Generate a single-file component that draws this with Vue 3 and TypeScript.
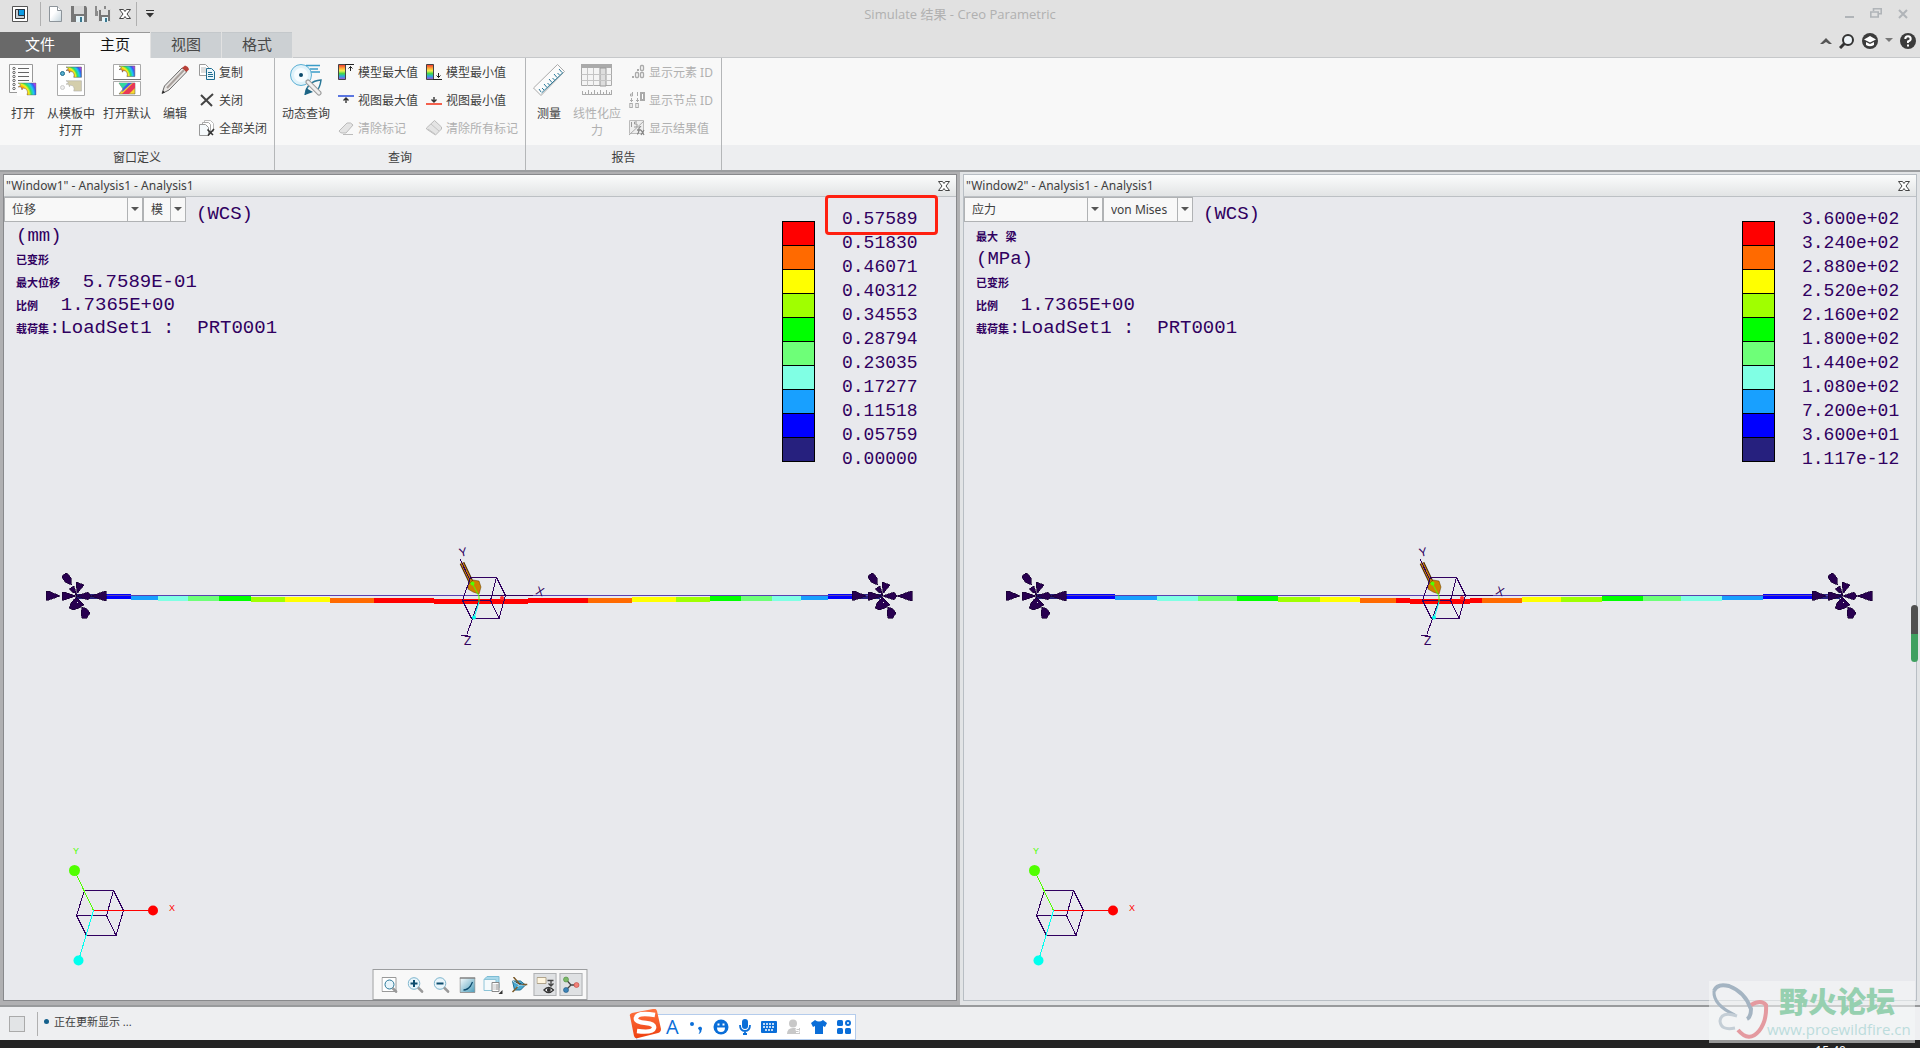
<script setup lang="ts">
import { ref } from 'vue'

interface Segment {
  x1: number
  x2: number
  y: number
  color: string
}
interface InfoLine {
  label: string
  value: string
}
interface ResultPane {
  id: string
  title: string
  quantity: string
  component: string
  narrow: boolean
  active: boolean
  info: InfoLine[]
  levels: string[]
  beam: Segment[]
}

const palette = ['#ff0000', '#ff6a00', '#ffff00', '#a0ff00', '#00ff00', '#6eff78', '#80ffe4', '#18a0ff', '#0000ff', '#26207e']

const [red, orange, yellow, lime, green, mint, cyan, sky, blue, navy] = palette

function buildBeam(stops: number[], colors: string[], tops: number[]): Segment[] {
  return colors.map((color, i) => ({ x1: stops[i], x2: stops[i + 1], y: tops[i], color }))
}

const ramp = [navy, blue, sky, cyan, mint, green, lime, yellow, orange]
const spectrum = [...ramp, red, red, red, ...[...ramp].reverse()]
const sag = [594, 594, 595, 596, 596, 596, 597, 597, 598]
const tops = [...sag, 598, 599, 598, ...[...sag].reverse()]

const panes = ref<ResultPane[]>([
  {
    id: 'w1',
    title: '"Window1" - Analysis1 - Analysis1',
    quantity: '位移',
    component: '模',
    narrow: true,
    active: true,
    info: [
      { label: '', value: '(mm)' },
      { label: '已变形', value: '' },
      { label: '最大位移', value: '  5.7589E-01' },
      { label: '比例', value: '  1.7365E+00' },
      { label: '载荷集', value: ':LoadSet1 :  PRT0001' },
    ],
    levels: ['0.57589', '0.51830', '0.46071', '0.40312', '0.34553', '0.28794', '0.23035', '0.17277', '0.11518', '0.05759', '0.00000'],
    beam: buildBeam(
      [76, 103, 131, 158, 188, 219, 251, 285, 330, 374, 434, 528, 588, 632, 676, 710, 741, 772, 801, 828, 852, 882],
      spectrum,
      tops,
    ),
  },
  {
    id: 'w2',
    title: '"Window2" - Analysis1 - Analysis1',
    quantity: '应力',
    component: 'von Mises',
    narrow: false,
    active: false,
    info: [
      { label: '最大   梁', value: '' },
      { label: '', value: '(MPa)' },
      { label: '已变形', value: '' },
      { label: '比例', value: '  1.7365E+00' },
      { label: '载荷集', value: ':LoadSet1 :  PRT0001' },
    ],
    levels: ['3.600e+02', '3.240e+02', '2.880e+02', '2.520e+02', '2.160e+02', '1.800e+02', '1.440e+02', '1.080e+02', '7.200e+01', '3.600e+01', '1.117e-12'],
    beam: buildBeam(
      [76, 103, 155, 197, 238, 277, 318, 360, 400, 436, 450, 510, 522, 562, 601, 642, 683, 721, 762, 803, 855, 882],
      spectrum,
      tops,
    ),
  },
])

const tabs = ['文件', '主页', '视图', '格式']
const activeTab = ref('主页')
</script>

<template>
  <div class="app">
    <svg class="defs" width="0" height="0" aria-hidden="true">
      <defs>
        <radialGradient id="rainbow" gradientUnits="userSpaceOnUse" cx="0" cy="12" r="20">
          <stop offset="0.2" stop-color="#e03090" />
          <stop offset="0.34" stop-color="#ff3020" />
          <stop offset="0.46" stop-color="#ffb000" />
          <stop offset="0.56" stop-color="#f8f020" />
          <stop offset="0.66" stop-color="#30e060" />
          <stop offset="0.78" stop-color="#20c8f0" />
          <stop offset="0.9" stop-color="#3060f0" />
          <stop offset="1" stop-color="#b040f0" />
        </radialGradient>
        <linearGradient id="bars" x1="0" y1="0" x2="0" y2="1">
          <stop offset="0" stop-color="#f03030" />
          <stop offset="0.25" stop-color="#ffa838" />
          <stop offset="0.42" stop-color="#f4f050" />
          <stop offset="0.6" stop-color="#48d848" />
          <stop offset="0.78" stop-color="#28a8e0" />
          <stop offset="1" stop-color="#b048d8" />
        </linearGradient>
        <linearGradient id="page" x1="0" y1="0" x2="1" y2="1">
          <stop offset="0.4" stop-color="#ffffff" />
          <stop offset="1" stop-color="#c4d4dc" />
        </linearGradient>
        <linearGradient id="aqua" x1="0" y1="0" x2="1" y2="1">
          <stop offset="0" stop-color="#fafdfe" />
          <stop offset="1" stop-color="#4a9cba" />
        </linearGradient>
        <linearGradient id="sogou" x1="0" y1="0" x2="0" y2="1">
          <stop offset="0" stop-color="#ff7440" />
          <stop offset="1" stop-color="#ee4010" />
        </linearGradient>
        <path id="fringe" d="M0 0H18V12H9Q11 6 5 5L4 7L3 4H0L3 2Z" />
        <g id="clamp">
          <path d="M-14 -19L-13 -21L-10 -23L-7 -21L-5 -18L-5 -14L-4 -11L-7 -12L-11 -14Z" />
          <path d="M-7 -7L-2 -10L1 0Z" />
          <path d="M0 -14L3 -13L8 -11L4 -6L1 -2Z" />
          <path d="M-30 -5L-27 -5L-16 0L-27 4L-30 4Z" />
          <path d="M-14 -4L-12 -4L0 0L-12 4L-14 4Z" />
          <path d="M0 0L12 -4L15 0L12 4Z" />
          <path d="M15 0L26 -4L30 -5V5L26 4Z" />
          <path d="M0 1L4 5L8 9L3 12L-3 14L-7 12L-5 7Z" />
          <path d="M6 11L11 13L14 17L11 22L6 22L5 17Z" />
          <path class="clamp-glint" d="M-2 -3h1v1h-1zM1 -3h1v1h-1zM-2 2h1v1h-1zM1 6h1v1h-1z" />
        </g>
      </defs>
    </svg>

    <header class="titlebar">
      <div class="quick">
        <button class="ico app-ico" aria-label="应用程序">
          <svg width="16" height="16"><path d="M.5 .5h15v15H.5z" fill="#fff" stroke="#555" /><path d="M3.500 3.500h9v9h-9z" fill="#c8cfd4" stroke="#333" /><path d="M6.500 3.500h6v6h-6z" fill="#0c9ce4" stroke="#234" /></svg>
        </button>
        <i class="sep"></i>
        <button class="ico" aria-label="新建">
          <svg width="14" height="16"><path d="M.5 .5h8l4 4v11H.5z" fill="url(#page)" stroke="#8d949a" /><path d="M8.500 .5v4h4" fill="#fff" stroke="#8d949a" /></svg>
        </button>
        <button class="ico" aria-label="保存">
          <svg width="16" height="16"><path d="M0 0h15l1 2v14H0z" fill="#777" /><path d="M3 0h10v8H3z" fill="#d6d6d6" /><path d="M5 10h8v6H5z" fill="#e4f3f8" /><path d="M9 11h2v5H9z" fill="#3a7890" /></svg>
        </button>
        <button class="ico" aria-label="另存为">
          <svg width="16" height="16"><path d="M0 0h11v10H0z" fill="#8c8c8c" /><path d="M2 0h7v5H2z" fill="#e2e2e2" /><path d="M3.500 3.500h12v12h-12z" fill="#777" stroke="#ddd" /><path d="M6 4h7v5H6z" fill="#e0e0e0" /><path d="M7 11h6v5H7z" fill="#e4f3f8" /><path d="M10 12h2v4h-2z" fill="#3a7890" /></svg>
        </button>
        <button class="ico close-ico" aria-label="关闭窗口">
          <svg width="12" height="12"><path d="M.5 1.500h4L6 3.500l1.500-2h4L8 6l3.500 4.500h-4L6 8.500l-1.500 2h-4L4 6z" fill="#fff" stroke="#444" /></svg>
        </button>
        <i class="sep"></i>
        <button class="ico" aria-label="自定义快速访问工具栏">
          <svg width="10" height="8"><path d="M1 .5h8" stroke="#333" /><path d="M1 3h8L5 7.500z" fill="#333" /></svg>
        </button>
      </div>
      <h1 class="title">Simulate 结果 - Creo Parametric</h1>
      <div class="syscmds">
        <button class="ico" aria-label="最小化"><svg width="12" height="12"><path d="M2 9h9" stroke="#b0b4b8" stroke-width="2" /></svg></button>
        <button class="ico" aria-label="还原"><svg width="12" height="12"><path d="M3.500 3V.8h7.700v5H8M.8 4h7.400v5H.8z" fill="none" stroke="#b0b4b8" stroke-width="1.600" /></svg></button>
        <button class="ico" aria-label="关闭"><svg width="12" height="12"><path d="M2 2l8 8M10 2l-8 8" stroke="#b0b4b8" stroke-width="2" /></svg></button>
      </div>
    </header>

    <nav class="tabrow">
      <button v-for="t in tabs" :key="t" class="tab" :class="{ file: t === '文件', on: t === activeTab }" @click="activeTab = t">{{ t }}</button>
      <div class="tabline">
        <button class="ico" aria-label="收起功能区"><svg width="12" height="8"><path d="M0 7l6-6 6 6H9L6 5 3 7z" fill="#555" /></svg></button>
        <button class="ico" aria-label="搜索"><svg width="16" height="16"><circle cx="9" cy="7" r="5" fill="#eef4f8" stroke="#333" stroke-width="2" /><path d="M5.500 10.500L1 15" stroke="#333" stroke-width="3" /></svg></button>
        <button class="ico" aria-label="学习"><svg width="16" height="16"><circle cx="8" cy="8" r="8" fill="#3c3c3c" /><path d="M8 3l6 3.500L8 9.500 2 6.500z" fill="#fff" /><path d="M4 9l4 2 4-2v3q-4 2.500-8 0z" fill="#fff" /></svg></button>
        <button class="ico" aria-label="更多"><svg width="8" height="5"><path d="M0 0h8L4 4z" fill="#777" /></svg></button>
        <button class="ico" aria-label="帮助"><svg width="16" height="16"><circle cx="8" cy="8" r="8" fill="#3c3c3c" /><path d="M5.300 6q0-2.700 2.700-2.700T10.700 6Q10.700 7.500 8 8.500V10" fill="none" stroke="#fff" stroke-width="2" /><path d="M7 11.500h2v2H7z" fill="#fff" /></svg></button>
      </div>
    </nav>

    <section class="ribbon">
      <div class="group">
        <div class="tools">
          <button class="big w46">
            <svg width="28" height="32"><path d="M.5 .5h23v28H.5z" fill="#fdfdfd" stroke="#999" /><path d="M9 4.500h11M9 8.500h11M9 12.500h11M9 16.500h11" stroke="#666" /><g fill="none" stroke="#666"><circle cx="5" cy="4.500" r="1.200" /><circle cx="5" cy="8.500" r="1.200" /><circle cx="5" cy="12.500" r="1.200" /><circle cx="5" cy="16.500" r="1.200" /><circle cx="5" cy="20.500" r="1.200" /><circle cx="5" cy="24.500" r="1.200" /></g><path d="M8 18h20v14H8z" fill="#fdfdfd" /><use href="#fringe" x="9" y="19" fill="url(#rainbow)" stroke="#555" stroke-width=".4" /></svg>
            <span>打开</span>
          </button>
          <button class="big w50">
            <svg width="28" height="32"><path d="M.5 .5h27v31H.5z" fill="#fff" stroke="#aaa" /><circle cx="5.500" cy="9.500" r="2" fill="#58b0d0" stroke="#1b6a8c" /><circle cx="5.500" cy="23.500" r="2" fill="#eee" stroke="#ccc" /><g transform="translate(9 3) scale(.86)"><use href="#fringe" fill="url(#rainbow)" stroke="#555" stroke-width=".6" /><use href="#fringe" y="16" fill="#d4ceac" stroke="#aaa" stroke-width=".6" /></g></svg>
            <span>从模板中<br />打开</span>
          </button>
          <button class="big w62">
            <svg width="28" height="32"><path d="M.5 .5h27v15H.5z" fill="#fff" stroke="#aaa" /><path d="M0 15.500h28" stroke="#777" /><path d="M.5 17.500h27v14H.5z" fill="#fff" stroke="#aaa" /><g transform="translate(6 2) scale(.88)"><use href="#fringe" fill="url(#rainbow)" stroke="#555" stroke-width=".6" /></g><path d="M6 19h16v11H6l4-5z" fill="#f8d830" stroke="#555" stroke-width=".5" /><path d="M9 30l11-11h2v5l-6 6z" fill="#e83858" /><path d="M6 19h9l-5 6z" fill="#30d8a0" /><path d="M9 28l10-9h-4l-5 5z" fill="#3f5fe8" /></svg>
            <span>打开默认</span>
          </button>
          <button class="big w34">
            <svg width="28" height="32"><path d="M1 29.500L3.500 22 21 4q3 0 4.500 4L8 26z" fill="#e9e6e4" stroke="#666" /><path d="M6 24L23 6" stroke="#a8a09c" stroke-width="2" /><path d="M21 4l3-2.500q3.500 1 4 4L25.500 8z" fill="#b84038" /><path d="M1 29.500l1-3 2 2z" fill="#222" /></svg>
            <span>编辑</span>
          </button>
          <div class="stack">
            <button class="small"><svg width="16" height="16"><path d="M.5 .5h6l3 3v8h-9z" fill="#fff" stroke="#999" /><path d="M2 4h5M2 6h5M2 8h5" stroke="#bbb" /><path d="M7.500 4.500h5l3 3v8h-8z" fill="#eaf6fb" stroke="#1f6d90" /><path d="M9 8.500h4M9 10.500h5M9 12.500h5" stroke="#1f6d90" /></svg>复制</button>
            <button class="small"><svg width="16" height="16"><path d="M2 3l11 11M14 2L2 13" stroke="#444" stroke-width="2" /></svg>关闭</button>
            <button class="small"><svg width="16" height="16"><path d="M5.500 .5h6l3 3v8h-9z" fill="#fff" stroke="#bbb" /><path d="M3.500 2.500h6l2 2v8h-8z" fill="#fff" stroke="#aaa" /><path d="M.5 4.500h6l3 3v8h-9z" fill="#f6fafc" stroke="#999" /><path d="M8.500 9.500l5.500 5.500M15 9l-6 6.500" stroke="#333" stroke-width="1.600" /></svg>全部关闭</button>
          </div>
        </div>
        <div class="caption">窗口定义</div>
      </div>

      <div class="group g2">
        <div class="tools">
          <button class="big w62">
            <svg width="32" height="32"><path d="M16 1.500h14M20 5h8M21 8h9" stroke="#3a9cc8" stroke-width="1.500" /><circle cx="11" cy="11" r="10.500" fill="#dff2fa" stroke="#5cb0d4" /><circle cx="11" cy="11" r="7" fill="#f6fcff" /><circle cx="11" cy="11" r="2" fill="#0b4a6c" /><path d="M15 31q2-14 16-15-1 8-5 12" fill="none" stroke="#2a7898" stroke-width="1.500" /><path d="M15 31l1-7 7 4z" fill="#1d6484" /><path d="M18 18l11 11" stroke="#999" stroke-width="5" stroke-linecap="round" /><path d="M18 18l11 11" stroke="#eee" stroke-width="3" stroke-linecap="round" /></svg>
            <span>动态查询</span>
          </button>
          <div class="stack c1">
            <button class="small"><svg width="16" height="16"><path d="M.5 .5h7v15h-7z" fill="url(#bars)" stroke="#444" /><path d="M7 .5h9M12.500 7V2.500M10.500 4.500l2-2 2 2" fill="none" stroke="#222" /></svg>模型最大值</button>
            <button class="small"><svg width="16" height="16"><path d="M0 4h16" stroke="#5b76e0" stroke-width="2" /><path d="M8 11V6M5.500 8.500L8 6l2.500 2.500" fill="none" stroke="#333" stroke-width="1.400" /></svg>视图最大值</button>
            <button class="small" disabled><svg width="16" height="16"><path d="M1 11l8-8q4-1 6 2l-7 8H4q-2 0-3-2z" fill="#e4e4e4" stroke="#bbb" /><path d="M5 14.500h10" stroke="#bbb" /></svg>清除标记</button>
          </div>
          <div class="stack c2">
            <button class="small"><svg width="16" height="16"><path d="M.5 .5h7v15h-7z" fill="url(#bars)" stroke="#444" /><path d="M7 15.500h9M12.500 9v4.500M10.500 11.500l2 2 2-2" fill="none" stroke="#222" /></svg>模型最小值</button>
            <button class="small"><svg width="16" height="16"><path d="M0 12h16" stroke="#f4604c" stroke-width="2" /><path d="M8 5v5M5.500 7.500L8 10l2.500-2.500" fill="none" stroke="#333" stroke-width="1.400" /></svg>视图最小值</button>
            <button class="small" disabled><svg width="16" height="16"><path d="M.5 8l8-7.500 7 6.500v2l-6 6-9-6z" fill="#e4e4e4" stroke="#bbb" /><path d="M5 4l8 7M2 9l7 5" stroke="#c4c4c4" fill="none" /></svg>清除所有标记</button>
          </div>
        </div>
        <div class="caption">查询</div>
      </div>

      <div class="group g3">
        <div class="tools">
          <button class="big w46">
            <svg width="32" height="32"><path d="M.5 24L24.500 .5l7 7L8 31.500z" fill="#fbfbfb" stroke="#aaa" /><path d="M8.500 29L30 8.500M8 28l-2-3M11 26l-2-2M14 23.500l-3-3.500M16.500 21l-2-2M19 18.500l-3-3.500M21.500 16l-2-2M24 13.500L21 10M26.500 11l-2-2M29 8.500L26 5" stroke="#2a7898" /></svg>
            <span>测量</span>
          </button>
          <button class="big w50" disabled>
            <svg width="32" height="32"><path d="M.5 .5h30v21H.5z" fill="#f4f4f4" stroke="#aaa" /><path d="M0 0h31v4H0z" fill="#aaa" /><path d="M19 4h6v18h-6z" fill="#ddd" stroke="#999" /><path d="M.5 10.500h30M.5 16.500h30M6.500 4v18M12.500 4v18" stroke="#c4c4c4" /><path d="M1 30.500h30M1.500 27v4M4.500 28v3M7.500 26v5M10.500 28v3M13.500 26v5M16.500 28v3M19.500 26v5M22.500 28v3M25.500 26v5M28.500 28v3M30.500 26v5" stroke="#aaa" /></svg>
            <span>线性化应<br />力</span>
          </button>
          <div class="stack c3">
            <button class="small" disabled><svg width="16" height="16"><g fill="none" stroke="#aaa" stroke-width="1.300"><rect x="11.500" y="1.500" width="3" height="5" rx="1" /><rect x="6.500" y="8.500" width="3" height="5" rx="1" /><rect x="11.500" y="8.500" width="3" height="5" rx="1" /></g><path d="M8 5h2v2H8zM3 12h2v2H3z" fill="#aaa" /></svg>显示元素 ID</button>
            <button class="small" disabled><svg width="16" height="16"><path d="M11 0h5v9h-5z" fill="#aaa" /><path d="M3.500 0v4h-2V2h2M8.500 0v4M2.500 6v4M1 8.500h3M8.500 6v4M7 8.500h3" fill="none" stroke="#aaa" /><rect x=".8" y="11.500" width="2.500" height="4" fill="none" stroke="#aaa" /><rect x="6.800" y="11.500" width="2.500" height="4" fill="none" stroke="#aaa" /><path d="M13.500 2v5" stroke="#fff" /></svg>显示节点 ID</button>
            <button class="small" disabled><svg width="16" height="16"><path d="M.5 .5h14v13H.5z" fill="#eee" stroke="#bbb" /><path d="M0 15L15 1" stroke="#aaa" /><path d="M2.500 2v5M8 2H5.500v2H8v3H5" fill="none" stroke="#999" /><path d="M8 14q2 0 2-6 1-2 2-1M8 10h4M12 10l3 5M15 10l-3 5" fill="none" stroke="#888" stroke-width="1.300" /></svg>显示结果值</button>
          </div>
        </div>
        <div class="caption">报告</div>
      </div>
      <div class="group rest"><div class="tools"></div><div class="caption"></div></div>
    </section>

    <main class="workspace">
      <div v-for="p in panes" :key="p.id" class="slot" :class="{ active: p.active }">
        <article class="pane">
          <header class="panehead">
            <h2>{{ p.title }}</h2>
            <button class="ico" aria-label="关闭结果窗口">
              <svg width="12" height="12"><path d="M.5 1.500h4L6 3.500l1.500-2h4L8 6l3.500 4.500h-4L6 8.500l-1.500 2h-4L4 6z" fill="#fff" stroke="#444" /></svg>
            </button>
          </header>
          <div class="canvas">
            <svg class="scene" viewBox="4 197 952 803" preserveAspectRatio="xMidYMid meet" aria-hidden="true">
              <g shape-rendering="crispEdges">
                <rect v-for="(s, i) in p.beam" :key="i" :x="s.x1" :y="s.y" :width="s.x2 - s.x1" height="5" :fill="s.color" />
                <path d="M76 595.500H882" stroke="#5a40b0" />
                <use href="#clamp" x="76" y="596" class="clamp" />
                <use href="#clamp" x="882" y="596" class="clamp" />
              </g>
              <path d="M462 563L472 584" stroke="#402000" stroke-width="5" />
              <path d="M462 563L472 584" stroke="#c07c10" stroke-width="3" />
              <path d="M468 585l5-5 6 1 2 6-2 7-6-2-5-3z" fill="#d08000" stroke="#604000" stroke-width=".5" />
              <g fill="none" stroke="#300060" shape-rendering="crispEdges">
                <path d="M470.500 577.500H496.500L505.500 595.500L499 618.500H471.500L462.500 600.500L470.500 577.500M462.500 600.500H490.500L496.500 577.500M490.500 600.500L499 618.500M479 600L467 634M479 595.500H533M460 559L470 580" />
              </g>
              <path d="M472 583l7 13v6" fill="none" stroke="#50ff00" />
              <circle cx="472.500" cy="583.500" r="2" fill="#50ff00" />
              <path d="M479 602l-5 16" stroke="#00ffee" /><circle cx="474" cy="617.500" r="2" fill="#00ffee" />
              <circle cx="502" cy="598" r="2" fill="#ff3030" />
              <g class="axis">
                <text x="0" y="0" transform="translate(460 557) rotate(-12)">Y</text>
                <text x="0" y="0" transform="translate(535 594) rotate(18)">X</text>
                <text x="464" y="645">Z</text>
              </g>
              <path d="M461 635.500h7" stroke="#300060" />
              <g fill="none" stroke="#300060" shape-rendering="crispEdges">
                <path d="M84.500 890.500H113.500L123.500 910.500L116 935.500H86.500L76.500 915.500L84.500 890.500M76.500 915.500H106.500L113.500 890.500M106.500 915.500L116 935.500" />
                <path d="M93.500 910.500L74.500 870.500" stroke="#50ff00" />
                <path d="M93.500 910.500H153" stroke="#ff0000" />
                <path d="M93.500 910.500L78.500 960.500" stroke="#00ffee" />
              </g>
              <circle cx="74.500" cy="870.500" r="5.500" fill="#50ff00" />
              <circle cx="153" cy="910.500" r="5" fill="#ff0000" />
              <circle cx="78.500" cy="960.500" r="5" fill="#00ffee" />
              <text class="tri" x="73" y="854" fill="#50ff00">Y</text>
              <text class="tri" x="169" y="911" fill="#ff0000">X</text>
            </svg>

            <div class="hud">
              <div class="readout">
                <div class="combos">
                  <span class="combo wide">
                    <select :aria-label="'结果量 ' + p.id"><option>{{ p.quantity }}</option></select>
                    <svg width="8" height="5"><path d="M0 0h8L4 4z" fill="#555" /></svg>
                  </span>
                  <span class="combo" :class="p.narrow ? 'slim' : 'mid'">
                    <select :aria-label="'分量 ' + p.id"><option>{{ p.component }}</option></select>
                    <svg width="8" height="5"><path d="M0 0h8L4 4z" fill="#555" /></svg>
                  </span>
                  <span class="plot wcs">(WCS)</span>
                </div>
                <p v-for="(l, i) in p.info" :key="i" class="line"><span class="cn">{{ l.label }}</span><span class="plot">{{ l.value }}</span></p>
              </div>
              <div class="legend">
                <div class="swatches">
                  <i v-for="c in palette" :key="c" :style="{ background: c }"></i>
                </div>
                <ol class="levels plot">
                  <li v-for="v in p.levels" :key="v">{{ v }}</li>
                </ol>
                <div v-if="p.active" class="marker"></div>
              </div>
            </div>

            <div v-if="p.active" class="viewbar">
              <button class="ico" aria-label="重新调整"><svg width="16" height="16"><path d="M.5 .5h14v14H.5z" fill="#fff" stroke="#999" /><circle cx="8" cy="7.500" r="4.500" fill="#e8f5fb" stroke="#2a7898" /><path d="M11 11l4.500 4.500" stroke="#999" stroke-width="2.500" /></svg></button>
              <button class="ico" aria-label="放大"><svg width="16" height="16"><circle cx="6.500" cy="6.500" r="5.800" fill="#e8f5fb" stroke="#7db4cc" /><path d="M3 6.500h7M6.500 3v7" stroke="#0d4c6e" stroke-width="2" /><path d="M10.500 10.500l5 5" stroke="#999" stroke-width="2.500" /></svg></button>
              <button class="ico" aria-label="缩小"><svg width="16" height="16"><circle cx="6.500" cy="6.500" r="5.800" fill="#e8f5fb" stroke="#7db4cc" /><path d="M3 6.500h7" stroke="#0d4c6e" stroke-width="2" /><path d="M10.500 10.500l5 5" stroke="#999" stroke-width="2.500" /></svg></button>
              <button class="ico" aria-label="重画"><svg width="16" height="16"><path d="M.5 1h15v14.500H.5z" fill="url(#aqua)" stroke="#999" /><path d="M0 1h16" stroke="#777" stroke-width="1" /><path d="M4 13q4 0 7-4l2-4" stroke="#0d4c6e" stroke-width="1.300" fill="none" /></svg></button>
              <button class="ico" aria-label="显示样式"><svg width="20" height="18"><path d="M.5 3.500l3-3h12v11l-3 3H.5z" fill="#a8d8ea" stroke="#7cbcd4" /><path d="M.5 3.500h12v11H.5z" fill="#f4fafc" stroke="#8cc4d8" /><path d="M8.500 6.500h7v9h-7z" fill="#fff" stroke="#888" /><path d="M10 9h1M12 9h3M10 11h1M12 11h3M10 13h1M12 13h3" stroke="#888" /><path d="M19 14v4h-4z" fill="#333" /></svg></button>
              <button class="ico" aria-label="视图方向"><svg width="16" height="16"><path d="M1 4h8l5 4-5 5H3z" fill="#48a8d0" stroke="#1f6d90" /><path d="M1 4l7 4 6 0M8 8l-5 5" stroke="#c8e8f4" /><path d="M2 0l6 7M1 15l5-5M11 7.500h5" stroke="#7a5a2a" stroke-width="1.500" /></svg></button>
              <button class="ico on" aria-label="注释显示"><svg width="18" height="18"><path d="M.5 1.500h9v6h-9z" fill="#fff6e0" stroke="#b0a48c" /><path d="M11 4.500h6M14.500 4.500v5M12 7.500l2.500 2.500 2.500-2.500" fill="none" stroke="#444" stroke-width="1.300" /><path d="M7.500 14q4.500-5 9.500 0-5 5-9.500 0z" fill="#fff" stroke="#333" stroke-width="1.400" /><circle cx="12.300" cy="14" r="2" fill="#333" /></svg></button>
              <button class="ico on" aria-label="旋转中心"><svg width="18" height="18"><path d="M3.500 3.500l5 5.500-5 5M8.500 9h5" fill="none" stroke="#444" stroke-width="1.300" /><circle cx="3.500" cy="3.500" r="2.500" fill="#7cb868" stroke="#4c8c40" stroke-width=".6" /><circle cx="3.500" cy="14" r="2.500" fill="#3c84b8" stroke="#205880" stroke-width=".6" /><circle cx="14" cy="9" r="2.500" fill="#f08078" stroke="#c04840" stroke-width=".6" /></svg></button>
            </div>
          </div>
        </article>
      </div>
      <i class="knob"></i>
    </main>

    <footer class="status">
      <input type="checkbox" class="flag" aria-label="导航器" />
      <i class="sep"></i>
      <p class="msg"><i class="dot"></i>正在更新显示 ...</p>
      <div class="ime">
        <svg class="logo" width="32" height="30"><path d="M1 7Q0 5 3 4L24 0q3-1 4 2l4 18q0 3-3 4L9 29q-3 1-4-2z" fill="url(#sogou)" /><path d="M26 6Q8 3 7 9q-1 4 10 5 9 1 8 5-1 5-17 3" fill="none" stroke="#fff" stroke-width="4.500" /></svg>
        <span class="mode">A</span>
        <svg width="14" height="16"><circle cx="3" cy="5" r="2" fill="#0a6ed8" /><path d="M9 9.500a2 2 0 1 1 3.500 1.500q0 3-3 4 1.500-2 1-3.500z" fill="#0a6ed8" /></svg>
        <svg width="16" height="16"><circle cx="8" cy="8" r="7.500" fill="#0a6ed8" /><path d="M4 8.500h8q0 4.500-4 4.500t-4-4.500zM4.500 4.500h2v2h-2zM9.500 4.500h2v2h-2z" fill="#fff" /></svg>
        <svg width="12" height="16"><rect x="3" y="0" width="6" height="10" rx="3" fill="#0a6ed8" /><path d="M1 6q0 6 5 6t5-6M6 12v4M4 15h4" fill="none" stroke="#0a6ed8" stroke-width="1.800" /></svg>
        <svg width="16" height="12"><rect width="16" height="12" rx="1" fill="#0a6ed8" /><path d="M2 3h12M2 6h12M4 9h8" stroke="#fff" stroke-width="1.600" stroke-dasharray="2 1" /></svg>
        <svg width="14" height="16"><circle cx="6" cy="4.500" r="4" fill="#c8c8c8" /><path d="M0 15q0-6 6-6h7v6z" fill="#c8c8c8" /><path d="M12 9.500H9v2h3v2H9" stroke="#fff" fill="none" /></svg>
        <svg width="16" height="14"><path d="M4 0q4 3 8 0l4 3-2 4-2-1v8H4V6L2 7 0 3z" fill="#0a6ed8" /></svg>
        <svg width="14" height="14"><g fill="#0a6ed8"><rect width="6" height="6" rx="1.500" /><rect x="9" y="1" width="4" height="4" rx="2" fill="#fff" stroke="#0a6ed8" stroke-width="2" /><rect y="8" width="6" height="6" rx="1.500" /><rect x="8" y="8" width="6" height="6" rx="1.500" /></g></svg>
      </div>
    </footer>
    <div class="taskbar"><time>15:40</time></div>

    <div class="watermark">
      <svg width="64" height="60"><g fill="none"><path d="M5 10Q8 2 20 5Q36 11 42 28Q42 36 38 38" stroke="#a4b4c2" stroke-width="4" /><path d="M5 10Q4 24 26 34" stroke="#a4b4c2" stroke-width="3" /><path d="M28 35Q12 30 11 40Q12 50 26 47" stroke="#c4ced6" stroke-width="3" /><path d="M42 24Q52 18 57 24Q58 40 50 50Q40 62 29 49" stroke="#e49aa0" stroke-width="4" /></g></svg>
      <div class="words"><strong>野火论坛</strong><span>www.proewildfire.cn</span></div>
    </div>
  </div>
</template>

<style>
html,
body {
  background: #b0b0b0;
}
</style>

<style scoped>
.app {
  position: relative;
  display: flex;
  flex-direction: column;
  height: 100vh;
  overflow: hidden;
  background: #e1e1e1;
  font: 12px/17px 'Noto Sans', 'Noto Sans CJK SC', sans-serif;
  color: #404040;
}
.defs {
  position: absolute;
}
svg {
  display: block;
  flex: none;
}
button {
  margin: 0;
  padding: 0;
  border: 0;
  background: none;
  font: inherit;
  color: inherit;
}
h1,
h2,
p,
ol {
  margin: 0;
  padding: 0;
  font: inherit;
  list-style: none;
}
.sep {
  width: 1px;
  height: 24px;
  background: #b0b0b0;
}
.ico {
  display: flex;
  align-items: center;
  justify-content: center;
}

.titlebar {
  display: grid;
  grid-template-columns: 1fr auto 1fr;
  height: 28px;
  padding-bottom: 4px;
  flex: none;
}
.quick {
  display: flex;
  align-items: center;
  gap: 8px;
  padding: 0 12px;
}
.app-ico {
  margin-right: 4px;
}
.close-ico {
  margin-right: -3px;
}
.title {
  font-family: 'Open Sans', 'Noto Sans CJK SC', sans-serif;
  font-size: 13px;
  line-height: 28px;
  color: #b0b0b0;
}
.syscmds {
  display: flex;
  justify-content: flex-end;
  gap: 15px;
  padding-right: 11px;
}

.tabrow {
  display: flex;
  gap: 1px;
  height: 26px;
  flex: none;
}
.tab {
  width: 70px;
  padding-bottom: 4px;
  background: #ccd0d3;
  font-size: 15px;
  line-height: 20px;
  border-top: 1px solid #c4c8cb;
  color: #484848;
}
.tab.file {
  width: 80px;
  margin-right: -1px;
  background: #696969;
  color: #fff;
  border-top-color: #696969;
}
.tab.on {
  background: #f8f8f8;
  border-top: 1px solid #999;
  color: #111;
}
.tabline {
  flex: 1;
  display: flex;
  justify-content: flex-end;
  align-items: center;
  gap: 7px;
  padding: 0 4px 8px 0;
  border-bottom: 1px solid #c6c8ca;
}

.ribbon {
  display: flex;
  flex: none;
  height: 112px;
  background: #f8f8f8;
  border-bottom: 2px solid #9c9ea0;
}
.group {
  display: flex;
  flex-direction: column;
  width: 274px;
  border-right: 1px solid #b4b6b8;
}
.g2 {
  width: 250px;
}
.g3 {
  width: 195px;
}
.rest {
  flex: 1;
  border: 0;
}
.tools {
  display: flex;
  flex: 1;
}
.caption {
  height: 25px;
  line-height: 25px;
  text-align: center;
  background: #edeef0;
}
.big {
  display: flex;
  flex-direction: column;
  align-items: center;
  gap: 9px;
  padding-top: 6px;
  white-space: nowrap;
}
.w34 {
  width: 34px;
}
.w46 {
  width: 46px;
}
.w50 {
  width: 50px;
}
.w62 {
  width: 62px;
}
.stack {
  display: flex;
  flex-direction: column;
  padding-left: 7px;
}
.stack.c1 {
  padding-left: 1px;
}
.stack.c2 {
  padding-left: 8px;
}
.small {
  display: flex;
  align-items: center;
  gap: 4px;
  height: 28px;
  white-space: nowrap;
}
button:disabled {
  color: #b0b0b0;
}

.workspace {
  position: relative;
  display: flex;
  flex: 1;
  min-height: 0;
  border-bottom: 2px solid #989a9c;
}
.slot {
  flex: 1;
  min-width: 0;
  display: flex;
  padding: 2px 3px 4px;
  background: #e2e4e6;
}
.slot.active {
  background: #b0b0b2;
}
.pane {
  flex: 1;
  min-width: 0;
  display: flex;
  flex-direction: column;
  border: 1px solid #b8bec4;
  background: #e8e9ed;
}
.active .pane {
  border-color: #88898c;
}
.panehead {
  display: flex;
  align-items: center;
  justify-content: space-between;
  height: 21px;
  flex: none;
  padding: 0 6px 0 2px;
  border-bottom: 1px solid #bcc0c4;
  background: linear-gradient(#fbfcfc, #e2e4e5);
}
.panehead h2 {
  line-height: 21px;
}
.canvas {
  position: relative;
  flex: 1;
  min-height: 0;
}
.scene {
  position: absolute;
  inset: 0;
  width: 100%;
  height: 100%;
}
.clamp {
  fill: #280050;
  stroke: #14002c;
  stroke-width: 0.6px;
}
.clamp-glint {
  fill: #e8e9ed;
  stroke: none;
}
.axis text {
  font: 12px 'Liberation Sans', sans-serif;
  fill: #300060;
}
.tri {
  font: 9px 'Liberation Sans', sans-serif;
}
.hud {
  position: relative;
  display: flex;
  justify-content: space-between;
}
.plot {
  font-family: 'Liberation Mono', monospace;
  font-size: 19px;
  white-space: pre;
  color: #300060;
}
.combos {
  display: flex;
  height: 25px;
  margin-bottom: 3px;
}
.combo {
  position: relative;
  display: flex;
}
.combo svg {
  position: absolute;
  right: 4px;
  top: 10px;
  pointer-events: none;
}
.combo::after {
  content: '';
  position: absolute;
  right: 15px;
  top: 0;
  width: 1px;
  height: 100%;
  background: #b0b2b4;
}
.combo select {
  appearance: none;
  width: 100%;
  margin: 0;
  padding: 0 16px 0 7px;
  border: 1px solid #b0b2b4;
  border-radius: 0;
  background: #f8f8f8;
  font: 12px/20px 'Noto Sans', 'Noto Sans CJK SC', sans-serif;
  color: #404040;
}
.wide {
  width: 139px;
}
.slim {
  width: 43px;
}
.mid {
  width: 90px;
}
.wcs {
  line-height: 34px;
  margin-left: 10px;
}
.line {
  display: flex;
  align-items: center;
  height: 23px;
  padding-left: 12px;
}
.line .plot {
  line-height: 23px;
}
.cn {
  font: bold 11px/23px 'Noto Sans CJK SC', sans-serif;
  white-space: pre;
  color: #300060;
}
.legend {
  position: relative;
  display: flex;
  gap: 27px;
  padding: 10px 14px 0 0;
}
.swatches {
  display: flex;
  flex-direction: column;
  margin-top: 14px;
  align-self: flex-start;
  border: 1px solid #000;
  border-bottom: 0;
}
.swatches i {
  width: 31px;
  height: 23px;
  border-bottom: 1px solid #000;
}
.levels {
  width: 100px;
  font-size: 18px;
  line-height: 24px;
}
.marker {
  position: absolute;
  left: 43px;
  top: -2px;
  width: 107px;
  height: 34px;
  border: 3px solid #ff2010;
  border-radius: 4px;
}
.viewbar {
  position: absolute;
  left: 50%;
  bottom: 0;
  transform: translateX(-50%);
  display: flex;
  align-items: center;
  gap: 3px;
  height: 29px;
  padding: 0 4px;
  border: 1px solid #9c9ea0;
  background: #f8f8f8;
}
.viewbar .ico {
  box-sizing: border-box;
  width: 23px;
  height: 23px;
}
.viewbar .on {
  border: 1px solid #b0b2b4;
  background: #dfe1e3;
}
.knob {
  position: absolute;
  right: 2px;
  top: 433px;
  width: 7px;
  height: 57px;
  border-radius: 4px;
  background: linear-gradient(#505050 50%, #3fa060 50%);
}

.status {
  position: relative;
  display: flex;
  align-items: center;
  flex: none;
  height: 33px;
  padding-left: 9px;
  background: #eeeff1;
}
.flag {
  appearance: none;
  width: 16px;
  height: 16px;
  margin: 0 12px 0 0;
  border: 1px solid #aaa;
  background: #e2e4e6;
}
.msg {
  display: flex;
  align-items: center;
  gap: 5px;
  padding: 0 0 4px 6px;
  font-size: 11px;
}
.dot {
  width: 5px;
  height: 5px;
  border-radius: 50%;
  background: #14608c;
}
.ime {
  position: absolute;
  left: 636px;
  bottom: 0;
  display: flex;
  align-items: center;
  gap: 10px;
  height: 24px;
  padding: 0 4px 0 29px;
  border: 1px solid #b4ccec;
  background: #fff;
}
.logo {
  position: absolute;
  left: -8px;
  bottom: 0;
}
.mode {
  font: 20px/24px 'Open Sans', sans-serif;
  color: #0a6ed8;
}
.taskbar {
  flex: none;
  height: 8px;
  background: #242424;
  overflow: hidden;
}
.taskbar time {
  display: block;
  padding: 2px 74px 0 0;
  text-align: right;
  color: #fff;
}
.watermark {
  position: absolute;
  right: 5px;
  bottom: 5px;
  display: flex;
  width: 206px;
  height: 62px;
  background: rgba(246, 247, 248, 0.55);
}
.words {
  display: flex;
  flex-direction: column;
  margin-left: -6px;
}
.words strong {
  padding-left: 12px;
  font: 900 29px/38px 'Noto Sans CJK SC', sans-serif;
  color: #96d0b0;
}
.words span {
  font: 15px/20px 'Open Sans', sans-serif;
  color: #bcdcdc;
}
</style>
